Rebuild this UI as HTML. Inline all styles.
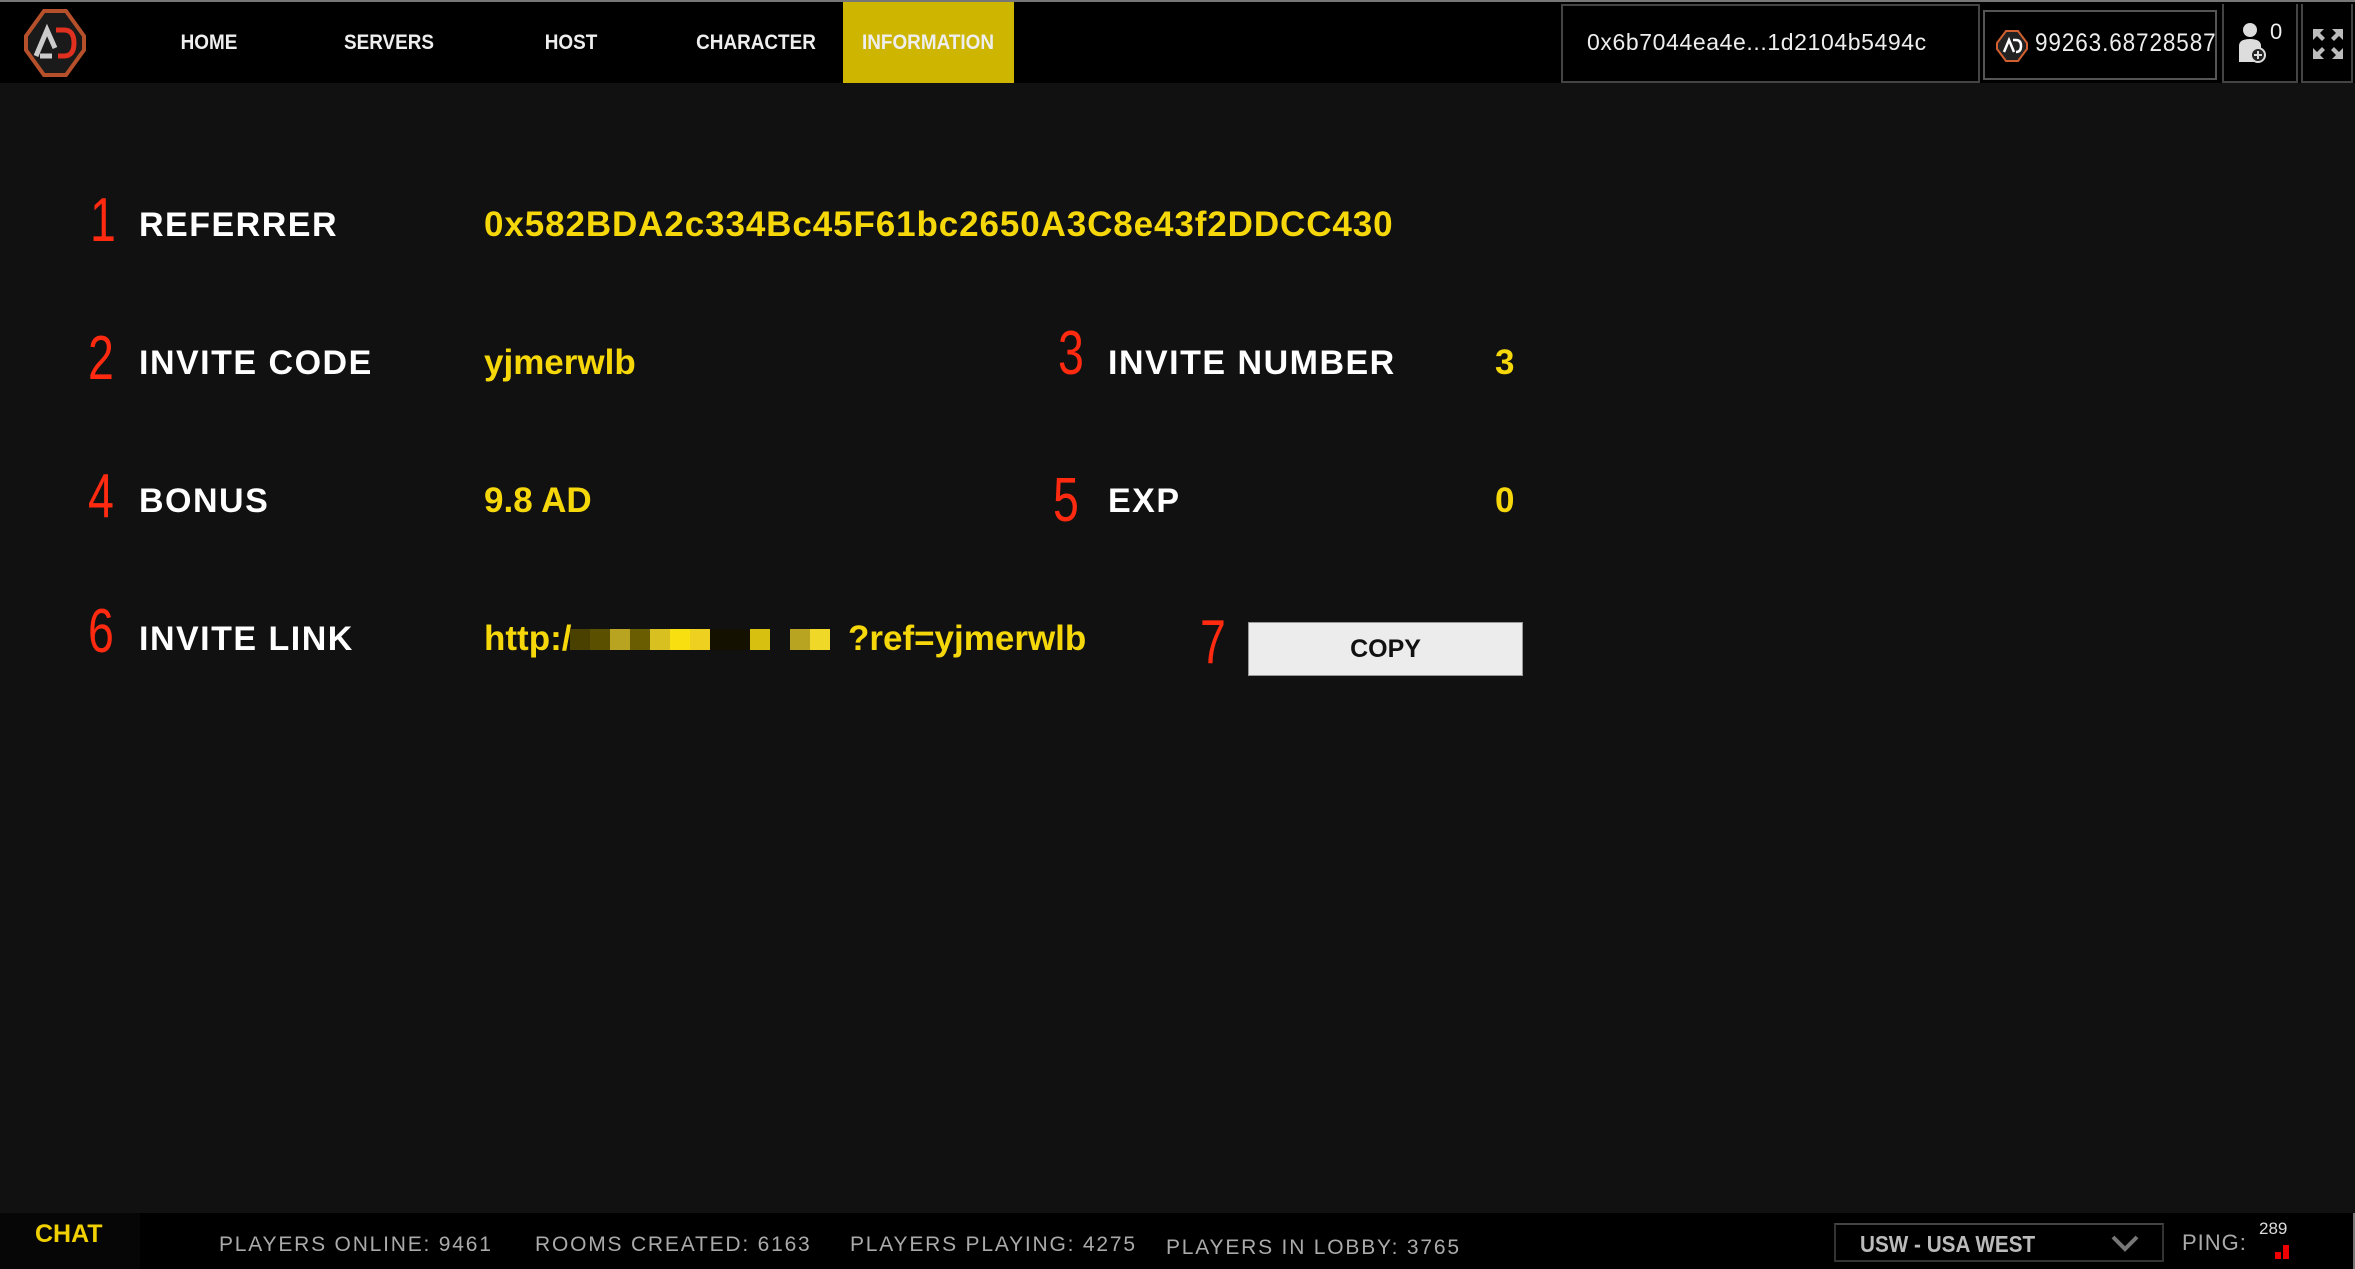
<!DOCTYPE html>
<html><head><meta charset="utf-8"><style>
*{margin:0;padding:0;box-sizing:border-box}
body{width:2355px;height:1269px;background:#111;overflow:hidden;position:relative;font-family:"Liberation Sans",sans-serif}
.abs{position:absolute;white-space:nowrap}
.nav{position:absolute;left:0;top:0;width:2355px;height:83px;background:#000;border-top:2px solid #777}
.nl{position:absolute;top:0;height:81px;line-height:81px;color:#eee;font-weight:bold;font-size:21px;transform:translateX(-50%) scaleX(.9)}
.num{position:absolute;color:#ff2a10;font-size:62px;line-height:1;transform:scaleX(.75);transform-origin:left}
.lab{position:absolute;color:#fff;font-size:34px;font-weight:bold;letter-spacing:1.5px;line-height:1}
.val{position:absolute;color:#f6d80a;font-size:35px;font-weight:bold;line-height:1}
.st{position:absolute;top:1233px;color:#aaa;font-size:21px;letter-spacing:1.8px}
</style></head><body>
<div class="nav">
<svg class="abs" style="left:22px;top:6px" width="66" height="70" viewBox="0 0 66 70"><polygon points="22,3 44,3 62,28 62,42 44,67 22,67 4,42 4,28" fill="#1a1a1a" stroke="#b5502a" stroke-width="4"/><path d="M14,48 L25,22 L33,40 M18,48 H30" stroke="#ccc" stroke-width="5" fill="none"/><path d="M34,22 H42 Q52,22 52,35 Q52,48 42,48 H36" stroke="#e03020" stroke-width="5" fill="none"/></svg>
<div class="nl" style="left:209px">HOME</div>
<div class="nl" style="left:389px">SERVERS</div>
<div class="nl" style="left:571px">HOST</div>
<div class="nl" style="left:756px">CHARACTER</div>
<div class="abs" style="left:843px;top:0;width:171px;height:81px;background:#cdb500"></div>
<div class="nl" style="left:928px">INFORMATION</div>
<div class="abs" style="left:1561px;top:2px;width:419px;height:79px;border:2px solid #444"></div>
<div class="abs" style="left:1587px;top:27px;color:#eee;font-size:23px;letter-spacing:.6px">0x6b7044ea4e...1d2104b5494c</div>
<div class="abs" style="left:1983px;top:8px;width:234px;height:70px;border:2px solid #555;overflow:hidden">
<svg class="abs" style="left:11px;top:18px" width="32" height="32" viewBox="0 0 32 32"><polygon points="10,1 22,1 31,13 31,19 22,31 10,31 1,19 1,13" fill="#222" stroke="#d06030" stroke-width="2"/><path d="M8,22 L13,10 L18,22 M17,10 H20 Q25,10 25,16 Q25,22 20,22" stroke="#fff" stroke-width="2.5" fill="none"/></svg>
<div class="abs" style="left:50px;top:17px;color:#eee;font-size:25px;letter-spacing:1px;transform:scaleX(.9);transform-origin:left">99263.68728587901</div></div>
<div class="abs" style="left:2222px;top:2px;width:76px;height:79px;border:2px solid #444;border-top:none"></div>
<svg class="abs" style="left:2238px;top:20px" width="30" height="42" viewBox="0 0 30 42"><circle cx="12" cy="8" r="7" fill="#ddd"/><path d="M1,40 V24 Q1,17 12,17 Q23,17 23,24 V40Z" fill="#ddd"/><circle cx="20" cy="33" r="7" fill="#222" stroke="#ddd" stroke-width="2"/><path d="M16,33 H24 M20,29 V37" stroke="#ddd" stroke-width="2"/></svg>
<div class="abs" style="left:2270px;top:17px;color:#eee;font-size:22px">0</div>
<div class="abs" style="left:2301px;top:2px;width:52px;height:79px;border:2px solid #444;border-top:none"></div>
<svg class="abs" style="left:2312px;top:26px" width="32" height="32" viewBox="0 0 32 32" fill="#bbb"><path d="M1,1 H12 L8,5 L13,10 L10,13 L5,8 L1,12Z M31,1 V12 L27,8 L22,13 L19,10 L24,5 L20,1Z M1,31 V20 L5,24 L10,19 L13,22 L8,27 L12,31Z M31,31 H20 L24,27 L19,22 L22,19 L27,24 L31,20Z"/></svg>
</div>

<div class="num" style="left:90px;top:190px">1</div><div class="lab" style="left:139px;top:208px">REFERRER</div><div class="val" style="left:484px;top:207px;letter-spacing:.9px">0x582BDA2c334Bc45F61bc2650A3C8e43f2DDCC430</div>
<div class="num" style="left:88px;top:328px">2</div><div class="lab" style="left:139px;top:346px">INVITE CODE</div><div class="val" style="left:484px;top:345px">yjmerwlb</div>
<div class="num" style="left:1058px;top:323px">3</div><div class="lab" style="left:1108px;top:346px">INVITE NUMBER</div><div class="val" style="left:1495px;top:345px">3</div>
<div class="num" style="left:88px;top:466px">4</div><div class="lab" style="left:139px;top:484px">BONUS</div><div class="val" style="left:484px;top:483px">9.8 AD</div>
<div class="num" style="left:1053px;top:470px">5</div><div class="lab" style="left:1108px;top:484px">EXP</div><div class="val" style="left:1495px;top:483px">0</div>
<div class="num" style="left:88px;top:601px">6</div><div class="lab" style="left:139px;top:622px">INVITE LINK</div>
<div class="val" style="left:484px;top:621px">http:/</div>
<div class="abs" style="left:570px;top:629px;height:21px;width:260px;display:flex">
<div style="width:20px;background:#4a4000"></div><div style="width:20px;background:#5a5000"></div><div style="width:20px;background:#b8a420"></div><div style="width:20px;background:#6a5c00"></div><div style="width:20px;background:#d8c020"></div><div style="width:20px;background:#f8e010"></div><div style="width:20px;background:#eed020"></div><div style="width:40px;background:#151100"></div><div style="width:20px;background:#d8c010"></div><div style="width:20px;background:#111"></div><div style="width:20px;background:#b8a420"></div><div style="width:20px;background:#f0d828"></div></div>
<div class="val" style="left:848px;top:621px">?ref=yjmerwlb</div>
<div class="num" style="left:1200px;top:612px">7</div>
<div class="abs" style="left:1248px;top:622px;width:275px;height:54px;background:#ececec;border:1px solid #999;text-align:center;line-height:52px;font-weight:bold;font-size:25px;color:#111">COPY</div>

<div class="abs" style="left:0;top:1213px;width:2355px;height:56px;background:#000;border-left:2px solid #777;border-right:2px solid #777"></div>
<div class="abs" style="left:0;top:1213px;width:140px;height:56px;background:#060606"></div>
<div class="abs" style="left:35px;top:1220px;color:#f0d000;font-weight:bold;font-size:25px">CHAT</div>
<div class="st" style="left:219px">PLAYERS ONLINE: 9461</div>
<div class="st" style="left:535px">ROOMS CREATED: 6163</div>
<div class="st" style="left:850px">PLAYERS PLAYING: 4275</div>
<div class="st" style="left:1166px;top:1236px">PLAYERS IN LOBBY: 3765</div>
<div class="abs" style="left:1834px;top:1223px;width:330px;height:39px;border:2px solid #333;border-top-color:#444"></div>
<div class="abs" style="left:1860px;top:1231px;color:#bbb;font-size:23px;font-weight:bold;transform:scaleX(.9);transform-origin:left">USW - USA WEST</div>
<svg class="abs" style="left:2110px;top:1234px" width="30" height="18" viewBox="0 0 30 18"><path d="M3,3 L15,15 L27,3" stroke="#777" stroke-width="4" fill="none"/></svg>
<div class="abs" style="left:2182px;top:1230px;color:#aaa;font-size:22px;letter-spacing:1px">PING:</div>
<div class="abs" style="left:2259px;top:1219px;color:#ddd;font-size:17px">289</div>
<div class="abs" style="left:2275px;top:1252px;width:6px;height:7px;background:#e00"></div>
<div class="abs" style="left:2283px;top:1245px;width:6px;height:14px;background:#e00"></div>
</body></html>
